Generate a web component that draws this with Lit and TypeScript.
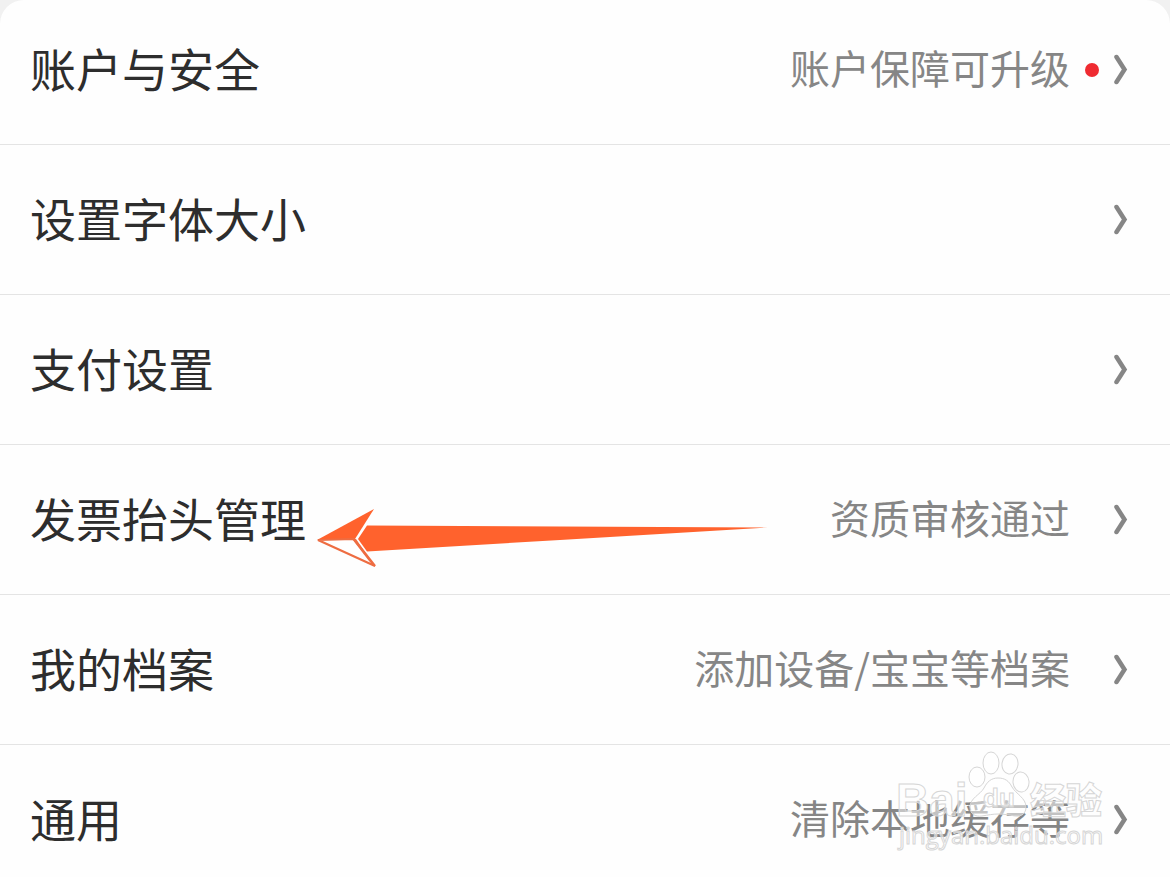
import { LitElement, html, svg, css, nothing } from "lit";
import { customElement, property } from "lit/decorators.js";

interface Setting {
  label: string;
  note?: string;
  dot?: boolean;
  pointer?: boolean;
  stamp?: boolean;
}

const SETTINGS: Setting[] = [
  { label: "账户与安全", note: "账户保障可升级", dot: true },
  { label: "设置字体大小" },
  { label: "支付设置" },
  { label: "发票抬头管理", note: "资质审核通过", pointer: true },
  { label: "我的档案", note: "添加设备/宝宝等档案" },
  { label: "通用", note: "清除本地缓存等", stamp: true },
];

const toes = [
  [81, 32, 8, 10, 0],
  [95, 18, 8, 11, 0],
  [114, 19, 8, 10, 8],
  [125, 37, 8, 10, -6],
];

@customElement("brand-stamp")
export class BrandStamp extends LitElement {
  static styles = css`
    :host {
      display: block;
    }
    svg {
      display: block;
      width: 216px;
      height: 110px;
    }
    .shape {
      fill: rgba(255, 255, 255, 0.5);
      stroke: #d6d6d6;
      stroke-width: 1px;
    }
    .word {
      font-family: "Liberation Sans", "Noto Sans CJK SC", sans-serif;
      font-weight: 700;
      font-size: 46px;
    }
    .small {
      font-size: 26px;
    }
    .han {
      font-family: "Noto Sans CJK SC", sans-serif;
      font-weight: 900;
      font-size: 36px;
    }
    .site {
      font-family: "Open Sans", "Noto Sans", sans-serif;
      font-size: 24px;
    }
  `;

  render() {
    return html`<svg viewBox="0 0 216 110" aria-hidden="true">
      <text class="shape word" x="0" y="71">Bai</text>
      ${toes.map(
        ([x, y, rx, ry, turn]) =>
          svg`<ellipse class="shape" cx=${x} cy=${y} rx=${rx} ry=${ry} transform="rotate(${turn} ${x} ${y})"/>`
      )}
      <path
        class="shape"
        d="M102 33c-7 0-11 4-14 10-4 7-14 10-14 19 0 7 5 10 12 9 6-1 11-2 16-2s12 1 17 2c7 1 11-3 11-9 0-9-10-13-14-20-3-6-7-9-14-9z"
      />
      <text class="shape word small" x="87" y="62">du</text>
      <text class="shape han" x="134" y="69">经验</text>
      <text class="shape site" x="3" y="99">jingyan.baidu.com</text>
    </svg>`;
  }
}

@customElement("setting-row")
export class SettingRow extends LitElement {
  @property({ attribute: false }) item!: Setting;

  static styles = css`
    :host {
      display: block;
    }
    .row {
      position: relative;
      display: flex;
      align-items: center;
      padding: var(--row-top, 40px) 40px var(--row-bottom, 39px) 30px;
      border-bottom: 1px solid #e4e4e4;
      color: #2d2d2d;
      text-decoration: none;
      line-height: 64px;
      white-space: nowrap;
    }
    :host(:last-of-type) .row {
      border-bottom: none;
    }
    .label,
    .note {
      padding-bottom: 6px;
    }
    .label {
      flex: 1;
      font-size: 46px;
    }
    .note {
      font-size: 40px;
      color: #868686;
    }
    .status {
      display: flex;
      justify-content: center;
      width: 44px;
    }
    .dot {
      width: 14px;
      height: 14px;
      border-radius: 50%;
      background: #ef2b31;
    }
    .chevron {
      display: block;
      width: 16px;
      height: 34px;
    }
    .pointer {
      position: absolute;
      left: 312px;
      top: 58px;
      width: 460px;
      height: 70px;
    }
    .stamp {
      position: absolute;
      right: 58px;
      top: 0;
    }
  `;

  render() {
    const { label, note, dot, pointer, stamp } = this.item;
    return html`<a class="row" href="#">
      <span class="label">${label}</span>
      ${note ? html`<span class="note">${note}</span>` : nothing}
      <span class="status">${dot ? html`<span class="dot"></span>` : nothing}</span>
      <svg class="chevron" viewBox="0 0 16 34" aria-hidden="true">
        <path
          d="M2.500 4 10.500 16.500 2.500 29"
          fill="none"
          stroke="#868686"
          stroke-width="4.500"
          stroke-linecap="round"
        />
      </svg>
      ${pointer
        ? html`<svg class="pointer" viewBox="312 503 460 70" aria-hidden="true">
            <path
              fill="#ff622d"
              d="M367 525.500 560 526.500 768 527.500 560 540 367 551.500 358 539z"
            />
            <path fill="#ff622d" d="M317 540 374 509 355 539z" />
            <path
              fill="#fff"
              stroke="#ee6d42"
              stroke-width="2.200"
              d="M318 540 354 539 375 566z"
            />
            <path fill="#ee6d42" d="M352 539 356 539 375 567 369 561z" />
          </svg>`
        : nothing}
      ${stamp ? html`<brand-stamp class="stamp"></brand-stamp>` : nothing}
    </a>`;
  }
}

@customElement("app-root")
export class AppRoot extends LitElement {
  static styles = css`
    :host {
      display: block;
      background: #f1f1f1;
      font-family: "Noto Sans CJK SC", sans-serif;
    }
    .list {
      background: #fefefe;
      border-radius: 24px 24px 0 0;
    }
    setting-row:first-of-type {
      --row-top: 35px;
    }
    setting-row:last-of-type {
      --row-bottom: 22px;
    }
  `;

  render() {
    return html`<nav class="list">
      ${SETTINGS.map((item) => html`<setting-row .item=${item}></setting-row>`)}
    </nav>`;
  }
}
